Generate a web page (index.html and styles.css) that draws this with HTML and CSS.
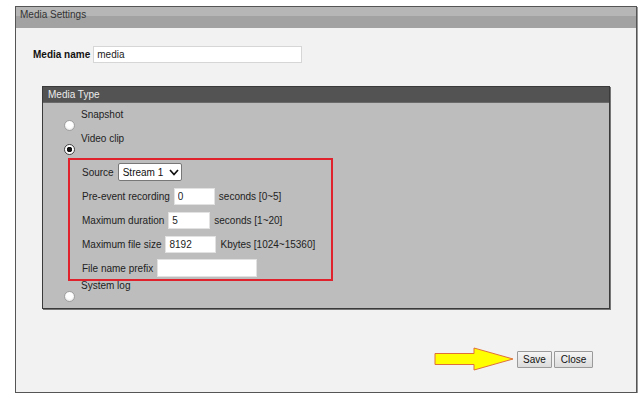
FILE: index.html
```html
<!DOCTYPE html>
<html lang="en">
<head>
    <meta charset="UTF-8">
    <title>Media Settings</title>
    <link rel="stylesheet" href="styles.css">
</head>
<body>
    <!-- Media settings dialog -->
    <div class="panel">
        <div class="panel-title">Media Settings</div>

        <div class="name-row">
            <label class="name-label" for="media-name">Media name</label>
            <input type="text" id="media-name" class="name-input" value="media">
        </div>

        <!-- Media type group -->
        <div class="type-box">
            <div class="type-head">Media Type</div>
            <div class="type-body">
                <div class="option">
                    <input type="radio" name="mtype" class="radio" id="t-snap">
                    <label for="t-snap">Snapshot</label>
                </div>
                <div class="option">
                    <input type="radio" name="mtype" class="radio" id="t-video" checked>
                    <label for="t-video">Video clip</label>
                </div>

                <div class="clip-box">
                    <div class="clip-row">
                        <span>Source</span>
                        <span class="select-wrap">
                            <select class="select">
                                <option>Stream 1</option>
                                <option>Stream 2</option>
                            </select>
                            <svg class="chevron" width="10" height="7" viewBox="0 0 10 7"><path d="M1 1 L5 5.5 L9 1" fill="none" stroke="#111" stroke-width="1.7"/></svg>
                        </span>
                    </div>
                    <div class="clip-row">
                        <span>Pre-event recording</span>
                        <input type="text" class="field w41" value="0">
                        <span>seconds [0~5]</span>
                    </div>
                    <div class="clip-row">
                        <span>Maximum duration</span>
                        <input type="text" class="field w42" value="5">
                        <span>seconds [1~20]</span>
                    </div>
                    <div class="clip-row">
                        <span>Maximum file size</span>
                        <input type="text" class="field w51" value="8192">
                        <span>Kbytes [1024~15360]</span>
                    </div>
                    <div class="clip-row">
                        <span>File name prefix</span>
                        <input type="text" class="field w100 tall" value="">
                    </div>
                </div>

                <div class="option syslog">
                    <input type="radio" name="mtype" class="radio" id="t-log">
                    <label for="t-log">System log</label>
                </div>
            </div>
        </div>

        <div class="actions">
            <svg class="arrow" width="80" height="24" viewBox="0 0 80 24">
                <polygon points="1,6.5 40,6.5 40,1 79,12 40,23 40,17.5 1,17.5" fill="#ffff00" stroke="#e0703a" stroke-width="1"/>
            </svg>
            <button class="btn save">Save</button>
            <button class="btn close">Close</button>
        </div>
    </div>
</body>
</html>
```

FILE: styles.css
```css
body {
    margin: 0;
    background-color: #fff;
    font-family: "Liberation Sans", Arial, sans-serif;
    font-size: 10px;
    color: #222;
}
.panel {
    margin: 6px 0 0 15px;
    width: 622px;
    height: 387px;
    box-sizing: border-box;
    background-color: #f2f2f2;
    border: 1px solid #555;
    box-shadow: 1px 1px 0 #999;
}
.panel-title {
    height: 21px;
    line-height: 16px;
    padding-left: 4px;
    color: #333;
    background: linear-gradient(#b6b6b6 0, #b6b6b6 9px, #a2a2a2 9px, #a2a2a2 100%);
}
.name-row {
    display: flex;
    align-items: center;
    margin-top: 18px;
    padding-left: 17px;
    height: 17px;
}
.name-label {
    font-weight: bold;
    color: #111;
    margin-right: 3px;
}
.name-input {
    width: 209px;
    height: 17px;
    box-sizing: border-box;
    border: 1px solid #d6d6d6;
    background: #fff;
    padding: 0 3px;
    font: inherit;
    color: #222;
}
.type-box {
    margin: 23px 0 0 26px;
    width: 568px;
    box-sizing: border-box;
    border: 1px solid #3a3a3a;
    box-shadow: 1px 1px 0 #777;
}
.type-head {
    height: 15px;
    line-height: 15px;
    padding-left: 5px;
    background-color: #535353;
    color: #ececec;
    border-bottom: 1px solid #6a6a6a;
}
.type-body {
    background-color: #bdbdbd;
    padding: 5px 0 5px 21px;
}
.option {
    display: flex;
    height: 24px;
    line-height: 14px;
}
.option label {
    margin-left: 6px;
}
.radio {
    appearance: none;
    margin: 12px 0 0 0;
    width: 11px;
    height: 11px;
    border-radius: 50%;
    background: radial-gradient(circle at 50% 40%, #fff 0, #fff 3px, #ececec 5px);
    border: 1px solid #a0a0a0;
    box-sizing: border-box;
}
.radio:checked {
    border-color: #444;
    background: radial-gradient(circle, #111 0, #111 2.5px, #fff 3px);
}
.syslog {
    margin-top: -2px;
}
.clip-box {
    margin: 2px 0 0 4px;
    width: 265px;
    box-sizing: border-box;
    border: 2px solid #e0222c;
    padding: 3px 0 2px 12px;
    display: flex;
    flex-direction: column;
    gap: 6px;
}
.clip-row {
    display: flex;
    align-items: center;
    gap: 4px;
    height: 18px;
}
.field {
    height: 17px;
    box-sizing: border-box;
    border: 1px solid #e2e2e2;
    background: #fff;
    padding: 0 3px;
    font: inherit;
    color: #222;
}
.w41 { width: 41px; }
.w42 { width: 42px; }
.w51 { width: 51px; }
.w100 { width: 100px; }
.tall { height: 18px; }
.select-wrap {
    position: relative;
    display: inline-block;
    height: 18px;
}
.select {
    appearance: none;
    width: 64px;
    height: 18px;
    box-sizing: border-box;
    border: 1px solid #777;
    border-radius: 2px;
    background: #fff;
    padding: 0 0 0 4px;
    font: inherit;
    color: #111;
}
.chevron {
    position: absolute;
    right: 3px;
    top: 6px;
    pointer-events: none;
}
.actions {
    display: flex;
    justify-content: flex-end;
    align-items: center;
    height: 24px;
    margin-top: 38px;
    padding-right: 43px;
}
.arrow {
    margin-right: 3px;
}
.btn {
    height: 17px;
    padding: 0;
    font: inherit;
    color: #111;
    background: linear-gradient(#f4f4f4, #dcdcdc);
    border: 1px solid #9a9a9a;
    border-radius: 1px;
}
.save { width: 35px; }
.close { width: 39px; margin-left: 2px; }
```
